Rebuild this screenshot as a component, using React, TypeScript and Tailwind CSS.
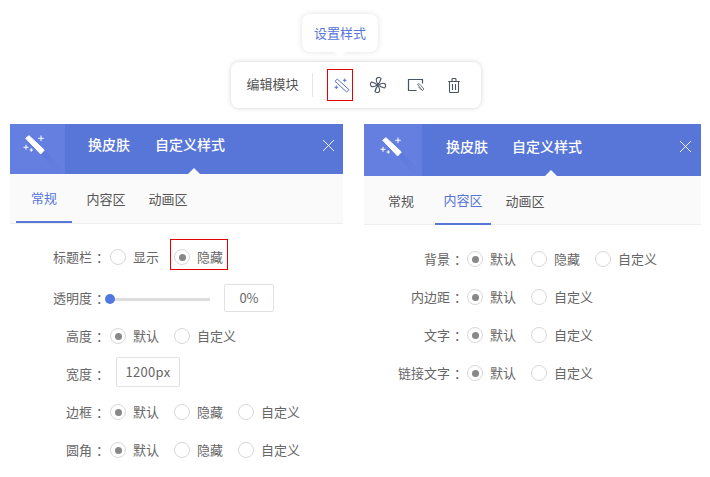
import React from 'react';

const font = { fontFamily: '"Noto Sans CJK SC", sans-serif' };

// 魔棒图标 (toolbar)
const WandSmall = () => (
  <svg width="20" height="20" viewBox="0 0 20 20" fill="none" stroke="#5875d8" strokeWidth="1">
    <path d="M5 6.300 L7.300 4 L19 14.700 L16.700 17 Z" />
    <path d="M14.700 3.500v3.600M12.900 5.300h3.600M6.300 10.500v3.600M4.500 12.300h3.600" />
  </svg>
);

const Fan = () => {
  const blade = 'M8 7.500C6.500 5 6 2 7 1c1-1 3.500-.5 4 .5C10.500 3.500 9.500 6 8 7.500Z';
  return (
    <svg width="16" height="16" viewBox="0 0 16 16" fill="none" stroke="#4a5563" strokeWidth="1.100">
      <path d={blade} />
      <path d={blade} transform="rotate(90 8 8)" />
      <path d={blade} transform="rotate(180 8 8)" />
      <path d={blade} transform="rotate(270 8 8)" />
    </svg>
  );
};

const ImageOff = () => (
  <svg width="18" height="14" viewBox="0 0 18 14" fill="none" stroke="#4a5563">
    <path d="M9.500 12.500H1.500V1.500H15.500V5.500" strokeWidth="1.200" />
    <path d="M10.500 6.500l1.500-1 5 5.500-1.500 1.500Z" strokeWidth="0.800" />
    <path d="M11.500 9l3.500 3.500" strokeWidth="0.800" />
  </svg>
);

const Trash = () => (
  <svg width="12" height="15" viewBox="0 0 12 15" fill="none" stroke="#4a5563" strokeWidth="1.100">
    <path d="M.2 3.500h11.600M1.500 3.500v10q0 1 1 1h7q1 0 1-1v-10M4 3.500v-2q0-1 1-1h2q1 0 1 1v2M4.500 6v6M7.500 6v6" />
  </svg>
);

// 面板左上角的白色魔棒
const WandLarge = ({ tall }: { tall?: boolean }) => (
  <svg className="w-full h-full" viewBox={tall ? '0 0 58 52' : '0 0 55 50'} fill="none">
    <defs>
      <linearGradient id={tall ? 'fadeB' : 'fadeA'} x1="0" y1="0" x2="1" y2="1">
        <stop offset="0" stopColor="#5270d4" />
        <stop offset="1" stopColor="#647fe0" />
      </linearGradient>
    </defs>
    <g transform={tall ? 'translate(3 2)' : undefined}>
      <path d="M19 11.700 L34.300 26 L52 44 L47 49 L30.700 30 Z" fill={`url(#${tall ? 'fadeB' : 'fadeA'})`} opacity="0.7" />
      <path d="M15.700 14.300 L19 11.700 L34.300 26 L30.700 30 Z" fill="#ffffff" stroke="#ffffff" strokeWidth="1" strokeLinejoin="round" />
      <path d="M31 11.500v5.600M28.200 14.300h5.600M16 20.800v5M13.500 23.300h5M21.300 24.300v3.400M19.600 26h3.400" stroke="#ffffff" strokeWidth="1" />
    </g>
  </svg>
);

const Close = () => (
  <svg width="11" height="11" viewBox="0 0 11 11" stroke="#ffffff" strokeWidth="0.900">
    <path d="M0 0l11 11M11 0L0 11" />
  </svg>
);

const Radio = ({ label, checked }: { label: string; checked?: boolean }) => (
  <div className="flex items-center mr-[15px]">
    <span className="w-4 h-4 rounded-full border border-[#d8d8d8] bg-white flex items-center justify-center mr-[7px]">
      {checked && <span className="w-[7px] h-[7px] rounded-full bg-[#888888]" />}
    </span>
    <span className="text-[13px] leading-none pb-[2px] text-[#666666]">{label}</span>
  </div>
);

const Row = ({ label, labelWidth, children, className }: { label: string; labelWidth: string; children: React.ReactNode; className: string }) => (
  <div className={`flex items-center ${className}`}>
    <span className={`text-[13px] leading-none pb-[2px] text-[#666666] text-right shrink-0 ${labelWidth}`}>
      {label}
      <span className="ml-[4px]">：</span>
    </span>
    {children}
  </div>
);

const Header = ({ tall, active }: { tall?: boolean; active: number }) => (
  <>
    <div className={`flex items-center bg-[#5875d8] ${tall ? 'h-[52px]' : 'h-[50px]'}`}>
      <div className={`h-full bg-[#647fe0] shrink-0 ${tall ? 'w-[58px]' : 'w-[55px]'}`}>
        <WandLarge tall={tall} />
      </div>
      <div className={`relative flex items-center h-full text-sm font-medium text-white ${tall ? 'pb-[9px] ml-[24px]' : 'pb-[10px] ml-[23px]'}`}>
        <span className={tall ? 'mr-[24px]' : 'mr-[25px]'}>换皮肤</span>
        <span>自定义样式</span>
        <span className={`absolute bottom-0 w-0 h-0 border-x-[6px] border-x-transparent border-b-[6px] border-b-[#fafafa] ${tall ? 'left-[99px]' : 'left-[100px]'}`} />
      </div>
      <div className={`ml-auto mb-[7px] flex ${tall ? 'mr-[10px]' : 'mr-[9px]'}`}>
        <Close />
      </div>
    </div>
    <div className={`flex bg-[#fafafa] border-b border-[#eeeeee] ${tall ? 'h-[49px] pl-[6px]' : 'h-[50px] pl-[3px]'}`}>
      {['常规', '内容区', '动画区'].map((t, i) => (
        <div key={t} className="w-[62px] flex justify-center">
          <span
            className={`w-[56px] h-[49px] flex items-center justify-center text-[13px] ${i === active ? 'text-[#5875d8] border-b-2 border-[#5875d8]' : 'text-[#555555]'}`}
          >
            {t}
          </span>
        </div>
      ))}
    </div>
  </>
);

export default function App() {
  return (
    <div className="w-[710px] h-[477px] bg-white overflow-hidden" style={font}>
      {/* 工具条 */}
      <div className="flex flex-col items-center pl-[1px] pt-[14px]">
        <div className="relative w-[76px] h-[38px] mr-[31px] rounded-lg bg-white shadow-[0_0_6px_rgba(0,0,0,0.12)] flex items-center justify-center text-[13px] text-[#5875d8]">
          设置样式
          <span className="absolute left-[32px] bottom-[-6px] w-0 h-0 border-x-[6px] border-x-transparent border-t-[6px] border-t-white" />
        </div>
        <div className="mt-[10px] w-[250px] h-[46px] rounded-lg bg-white shadow-[0_0_5px_rgba(0,0,0,0.18)] flex items-center pl-[16px] text-[13px] text-[#555555]">
          <span className="pb-[2px]">编辑模块</span>
          <span className="w-px h-[24px] bg-[#e6e6e6] ml-[13px] mr-[14px]" />
          <span className="w-[26px] h-[32px] border border-[#e60000] flex items-center justify-center">
            <WandSmall />
          </span>
          <span className="flex ml-[17px]"><Fan /></span>
          <span className="flex ml-[21px]"><ImageOff /></span>
          <span className="flex ml-[23px]"><Trash /></span>
        </div>
      </div>

      <div className="flex items-start pl-[10px] mt-[16px] gap-[21px]">
        {/* 常规 */}
        <div className="w-[333px]">
          <Header active={0} />
          <div className="pt-[23px]">
            <Row label="标题栏" labelWidth="w-[99px]" className="h-[20px]">
              <span className="w-[1px]" />
              <Radio label="显示" />
              <div className="relative">
                <span className="absolute left-[-4px] top-[-10px] w-[58px] h-[31px] border border-[#e60000]" />
                <Radio label="隐藏" checked />
              </div>
            </Row>
            <Row label="透明度" labelWidth="w-[99px]" className="mt-[17px] h-[28px]">
              <div className="relative w-[100px] h-[3px] mt-[3px] bg-[#dddddd] ml-[1px] mr-[14px]">
                <span className="absolute left-[-5px] top-[-4px] w-[10px] h-[10px] rounded-full bg-[#5078e0]" />
              </div>
              <span className="w-[50px] h-[28px] rounded-[2px] border border-[#e2e2e2] flex items-center justify-center text-[13px] text-[#666666]">0%</span>
            </Row>
            <Row label="高度" labelWidth="w-[99px]" className="mt-[14px] h-[20px]">
              <span className="w-[1px]" />
              <Radio label="默认" checked />
              <Radio label="自定义" />
            </Row>
            <Row label="宽度" labelWidth="w-[99px]" className="mt-[11px] h-[34px]">
              <span className="w-[7px]" />
              <span className="w-[64px] h-[30px] mb-[4px] rounded-[2px] border border-[#e2e2e2] flex items-center justify-center text-[13px] tracking-[0.3px] text-[#666666]">1200px</span>
            </Row>
            <Row label="边框" labelWidth="w-[99px]" className="mt-[11px] h-[20px]">
              <span className="w-[1px]" />
              <Radio label="默认" checked />
              <Radio label="隐藏" />
              <Radio label="自定义" />
            </Row>
            <Row label="圆角" labelWidth="w-[99px]" className="mt-[18px] h-[20px]">
              <span className="w-[1px]" />
              <Radio label="默认" checked />
              <Radio label="隐藏" />
              <Radio label="自定义" />
            </Row>
          </div>
        </div>

        {/* 内容区 */}
        <div className="w-[337px]">
          <Header tall active={1} />
          <div className="pt-[24px]">
            {[
              ['背景', ['默认', '隐藏', '自定义']],
              ['内边距', ['默认', '自定义']],
              ['文字', ['默认', '自定义']],
              ['链接文字', ['默认', '自定义']],
            ].map(([label, opts]) => (
              <div key={label as string} className="mb-[18px]">
                <Row label={label as string} labelWidth="w-[103px]" className="h-[20px]">
                  {(opts as string[]).map((o, i) => (
                    <Radio key={o} label={o} checked={i === 0} />
                  ))}
                </Row>
              </div>
            ))}
          </div>
        </div>
      </div>
    </div>
  );
}
